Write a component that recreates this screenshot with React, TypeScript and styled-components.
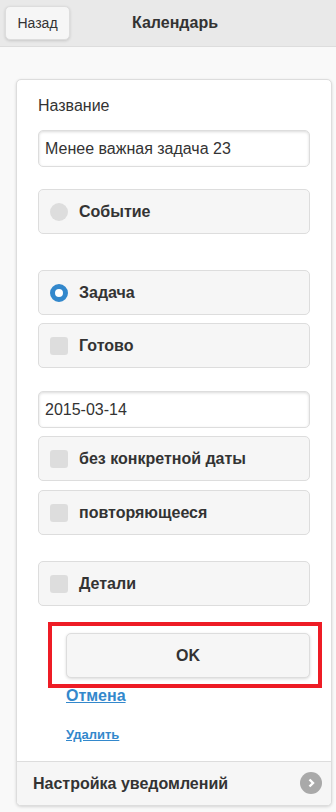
import React from "react";
import styled, { createGlobalStyle } from "styled-components";

const Global = createGlobalStyle`
  html, body { margin: 0; padding: 0; background: #f9f9f9; }
  body { font-family: "Liberation Sans", Arial, sans-serif; color: #333; }
  * { box-sizing: border-box; }
`;

const Page = styled.div`
  width: 336px;
  min-height: 812px;
  background: #f9f9f9;
  display: flex;
  flex-direction: column;
`;

const Header = styled.header`
  height: 47px;
  background: #e9e9e9;
  border-bottom: 1px solid #dddddd;
  display: flex;
  align-items: center;
  padding: 0 56px 0 5px;
`;

const BackButton = styled.button`
  width: 65px;
  height: 34px;
  margin-top: -1px;
  background: #f6f6f6;
  border: 1px solid #dddddd;
  border-radius: 5px;
  box-shadow: 0 1px 3px rgba(0, 0, 0, 0.15);
  font-family: "Liberation Sans", Arial, sans-serif;
  font-size: 14px;
  color: #333;
  padding: 0;
`;

const Title = styled.h1`
  flex: 1;
  margin: 0;
  text-align: center;
  font-size: 16px;
  font-weight: bold;
  color: #333;
  line-height: 20px;
  margin-top: -1px;
`;

const Card = styled.div`
  margin: 32px 4px 6px 16px;
  background: #fff;
  border: 1px solid #dddddd;
  border-radius: 5px;
  box-shadow: 0 1px 3px rgba(0, 0, 0, 0.15);
  overflow: hidden;
`;

const CardBody = styled.div`
  padding: 16px 21px 18px;
  display: flex;
  flex-direction: column;
`;

const Label = styled.label`
  font-size: 16px;
  line-height: 20px;
  margin-bottom: 14px;
`;

const TextInput = styled.div<{ $mt?: number }>`
  height: 37px;
  margin-top: ${(p) => p.$mt ?? 0}px;
  border: 1px solid #dddddd;
  border-radius: 5px;
  background: #fff;
  box-shadow: inset 0 1px 3px rgba(0, 0, 0, 0.15);
  display: flex;
  align-items: center;
  padding: 0 6px;
  font-size: 16px;
  color: #333;
`;

const Option = styled.div<{ $mt: number }>`
  height: 45px;
  margin-top: ${(p) => p.$mt}px;
  border: 1px solid #dddddd;
  border-radius: 5px;
  background: #f6f6f6;
  display: flex;
  align-items: center;
  padding-left: 11px;
  gap: 11px;
  font-size: 16px;
  font-weight: bold;
  color: #333;
`;

const Radio = styled.span<{ $on?: boolean }>`
  width: 18px;
  height: 18px;
  border-radius: 50%;
  background: ${(p) => (p.$on ? "#fff" : "#dddddd")};
  border: ${(p) => (p.$on ? "5px solid #3388cc" : "none")};
  flex: none;
`;

const Check = styled.span`
  width: 18px;
  height: 18px;
  border-radius: 3px;
  background: #dddddd;
  flex: none;
`;

const Highlight = styled.div`
  margin: 16px -12px 0 10px;
  border: 4px solid #ee1c25;
  padding: 7px 8px 6px 14px;
`;

const OkButton = styled.button`
  width: 100%;
  height: 45px;
  background: #f6f6f6;
  border: 1px solid #dddddd;
  border-radius: 5px;
  box-shadow: 0 1px 3px rgba(0, 0, 0, 0.15);
  font-family: "Liberation Sans", Arial, sans-serif;
  font-size: 16px;
  font-weight: bold;
  color: #333;
`;

const Link = styled.a<{ $size: number; $mt: number }>`
  align-self: flex-start;
  margin-left: 28px;
  margin-top: ${(p) => p.$mt}px;
  font-size: ${(p) => p.$size}px;
  line-height: ${(p) => p.$size + 4}px;
  font-weight: bold;
  color: #3388cc;
  text-decoration: underline;
`;

const Footer = styled.div`
  height: 44px;
  border-top: 1px solid #dddddd;
  background: #f6f6f6;
  display: flex;
  align-items: center;
  justify-content: space-between;
  padding: 0 9px 0 16px;
  font-size: 16px;
  font-weight: bold;
  color: #333;
`;

const ArrowCircle = styled.span`
  width: 22px;
  height: 22px;
  border-radius: 50%;
  background: #a9a9a9;
  display: flex;
  align-items: center;
  justify-content: center;
  margin-top: -1px;
`;

export default function App() {
  return (
    <Page>
      <Global />
      <Header>
        <BackButton>Назад</BackButton>
        <Title>Календарь</Title>
      </Header>
      <Card>
        <CardBody>
          <Label>Название</Label>
          <TextInput>Менее важная задача 23</TextInput>
          <Option $mt={22}>
            <Radio />
            Событие
          </Option>
          <Option $mt={36}>
            <Radio $on />
            Задача
          </Option>
          <Option $mt={8}>
            <Check />
            Готово
          </Option>
          <TextInput $mt={23}>2015-03-14</TextInput>
          <Option $mt={8}>
            <Check />
            без конкретной даты
          </Option>
          <Option $mt={9}>
            <Check />
            повторяющееся
          </Option>
          <Option $mt={26}>
            <Check />
            Детали
          </Option>
          <Highlight>
            <OkButton>OK</OkButton>
          </Highlight>
          <Link $size={16} $mt={-2}>Отмена</Link>
          <Link $size={13} $mt={20}>Удалить</Link>
        </CardBody>
        <Footer>
          Настройка уведомлений
          <ArrowCircle>
            <svg width="12" height="12" viewBox="0 0 12 12">
              <path d="M4.5 2.5 L8 6 L4.5 9.5" fill="none" stroke="#fff" strokeWidth="2.4" />
            </svg>
          </ArrowCircle>
        </Footer>
      </Card>
    </Page>
  );
}
